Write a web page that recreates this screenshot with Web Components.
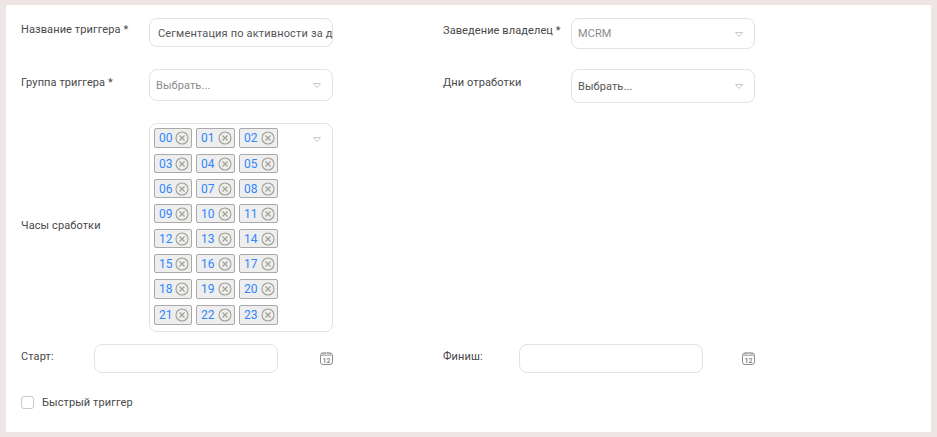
<!DOCTYPE html>
<html>
<head>
<meta charset="utf-8">
<style>
  html, body { margin: 0; background: #efe5e5; }
  body { font-family: Roboto, sans-serif; font-size: 11px; color: #444; }
</style>
</head>
<body>
<trigger-form></trigger-form>

<script>
const CHEVRON = `<svg width="8" height="5" viewBox="0 0 8 5"><path d="M.5.5h7L4 4.5z" fill="none" stroke="#c8c8c8"/></svg>`;

class FormRow extends HTMLElement {
  constructor() {
    super();
    this.attachShadow({ mode: 'open' });
    this.shadowRoot.innerHTML = `
      <style>
        :host {
          display: grid;
          grid-template-columns: var(--label-w, 128px) 184px;
          align-items: var(--row-align, start);
        }
        .label {
          padding-top: var(--label-top, 0);
          padding-bottom: var(--label-bottom, 0);
          line-height: 14px;
          color: #484848;
          letter-spacing: 0.1px;
          white-space: nowrap;
        }
      </style>
      <div class="label"><slot name="label"></slot></div>
      <div><slot></slot></div>
    `;
  }
}

class TextBox extends HTMLElement {
  constructor() {
    super();
    this.attachShadow({ mode: 'open' });
    this.shadowRoot.innerHTML = `
      <style>
        :host {
          display: flex;
          align-items: center;
          box-sizing: border-box;
          height: 29px;
          padding: 1px 0 0 8px;
          border: 1px solid #e2e2e2;
          border-radius: 8px;
          background: #fff;
          color: #555;
          white-space: nowrap;
          letter-spacing: 0.16px;
        }
      </style>
      <slot></slot>
    `;
  }
}

class SelectBox extends HTMLElement {
  constructor() {
    super();
    this.attachShadow({ mode: 'open' });
    this.shadowRoot.innerHTML = `
      <style>
        :host {
          display: flex;
          align-items: center;
          justify-content: space-between;
          box-sizing: border-box;
          height: var(--select-h, 32px);
          padding: 0 11px 0 6px;
          border: 1px solid #e2e2e2;
          border-radius: 8px;
          background: #fff;
          color: var(--select-color, #8b8b8b);
          letter-spacing: 0.1px;
        }
        svg { flex: none; margin-top: 1px; }
      </style>
      <span><slot></slot></span>
      ${CHEVRON}
    `;
  }
}

class HourTag extends HTMLElement {
  constructor() {
    super();
    this.attachShadow({ mode: 'open' });
    this.shadowRoot.innerHTML = `
      <style>
        :host {
          display: flex;
          align-items: center;
          justify-content: space-between;
          box-sizing: border-box;
          padding: 0 2px 0 4px;
          border: 1px solid #a9a9a9;
          border-radius: 2px;
          background: #eee;
          color: #2f86ff;
          font-size: 12px;
        }
        svg { flex: none; }
      </style>
      <span><slot></slot></span>
      <svg width="14" height="14" viewBox="0 0 14 14" fill="none" stroke="#a0a094" stroke-width="1.1">
        <circle cx="7" cy="7" r="6"/>
        <path d="M4.5 4.5l5 5M9.5 4.5l-5 5"/>
      </svg>
    `;
  }
}

class HoursSelect extends HTMLElement {
  constructor() {
    super();
    this.attachShadow({ mode: 'open' });
    let tags = '';
    for (let i = 0; i < 24; i++) {
      tags += `<hour-tag>${String(i).padStart(2, '0')}</hour-tag>`;
    }
    this.shadowRoot.innerHTML = `
      <style>
        :host {
          display: flex;
          justify-content: space-between;
          box-sizing: border-box;
          height: 209px;
          padding: 4px 11px 0 4px;
          border: 1px solid #e2e2e2;
          border-radius: 8px;
          background: #fff;
        }
        .tags {
          display: grid;
          grid-template-columns: 38px 39px 39px;
          grid-template-rows: 20px repeat(5, 19px) 20px 20px;
          gap: 6px 4px;
        }
        svg { flex: none; margin-top: 9px; }
      </style>
      <div class="tags">${tags}</div>
      ${CHEVRON}
    `;
  }
}

class DateField extends HTMLElement {
  constructor() {
    super();
    this.attachShadow({ mode: 'open' });
    this.shadowRoot.innerHTML = `
      <style>
        :host {
          display: grid;
          grid-template-columns: var(--label-w) 184px 1fr;
          align-items: start;
          width: 312px;
        }
        .label { line-height: 14px; padding-top: 6px; color: #484848; letter-spacing: 0.1px; }
        .box {
          box-sizing: border-box;
          height: 29px;
          border: 1px solid #e2e2e2;
          border-radius: 8px;
          background: #fff;
        }
        svg { justify-self: end; margin-top: 8px; }
        text { font: 500 7px Roboto, sans-serif; fill: #777; }
      </style>
      <div class="label"><slot></slot></div>
      <div class="box"></div>
      <svg width="13" height="13" viewBox="0 0 13 13" fill="none" stroke="#8c8c8c">
        <rect x=".5" y="1" width="12" height="11.5" rx="2.5"/>
        <path d="M1 3.5h11" stroke="#b5b5b5"/>
        <path d="M3 .5v2.5M5 .5v2.5M8 .5v2.5M10 .5v2.5" stroke-width=".8"/>
        <text x="6.5" y="10.8" text-anchor="middle" stroke="none">12</text>
      </svg>
    `;
  }
}

class CheckField extends HTMLElement {
  constructor() {
    super();
    this.attachShadow({ mode: 'open' });
    this.shadowRoot.innerHTML = `
      <style>
        :host { display: flex; align-items: center; gap: 8px; height: 13px; color: #484848; letter-spacing: 0.1px; }
        .box {
          box-sizing: border-box;
          width: 13px;
          height: 13px;
          border: 1px solid #c8c8c8;
          border-radius: 3px;
          background: #fff;
        }
      </style>
      <div class="box"></div>
      <slot></slot>
    `;
  }
}

class TriggerForm extends HTMLElement {
  constructor() {
    super();
    this.attachShadow({ mode: 'open' });
    this.shadowRoot.innerHTML = `
      <style>
        :host {
          display: block;
          box-sizing: border-box;
          height: 427px;
          margin: 5px 6px;
          padding: 13px 15px 0;
          background: #fff;
        }
        .grid {
          display: grid;
          grid-template-columns: 422px 312px;
          row-gap: 20px;
        }
        .hours { --row-align: center; --label-bottom: 3px; }
        .dates {
          display: grid;
          grid-template-columns: 422px 312px;
          margin-top: 12px;
        }
        check-field { margin-top: 23px; }
      </style>
      <div class="grid">
        <form-row style="--label-top:5px">
          <span slot="label">Название триггера *</span>
          <text-box>Сегментация по активности за д</text-box>
        </form-row>
        <form-row style="--label-top:6px;--select-h:31px">
          <span slot="label">Заведение владелец *</span>
          <select-box>MCRM</select-box>
        </form-row>
        <form-row style="--label-top:7px">
          <span slot="label">Группа триггера *</span>
          <select-box>Выбрать...</select-box>
        </form-row>
        <form-row style="--label-top:7px;--select-h:34px;--select-color:#555">
          <span slot="label">Дни отработки</span>
          <select-box>Выбрать...</select-box>
        </form-row>
        <form-row class="hours">
          <span slot="label">Часы сработки</span>
          <hours-select></hours-select>
        </form-row>
      </div>
      <div class="dates">
        <date-field style="--label-w:73px">Старт:</date-field>
        <date-field style="--label-w:76px">Финиш:</date-field>
      </div>
      <check-field>Быстрый триггер</check-field>
    `;
  }
}

customElements.define('form-row', FormRow);
customElements.define('text-box', TextBox);
customElements.define('select-box', SelectBox);
customElements.define('hour-tag', HourTag);
customElements.define('hours-select', HoursSelect);
customElements.define('date-field', DateField);
customElements.define('check-field', CheckField);
customElements.define('trigger-form', TriggerForm);
</script>
</body>
</html>
